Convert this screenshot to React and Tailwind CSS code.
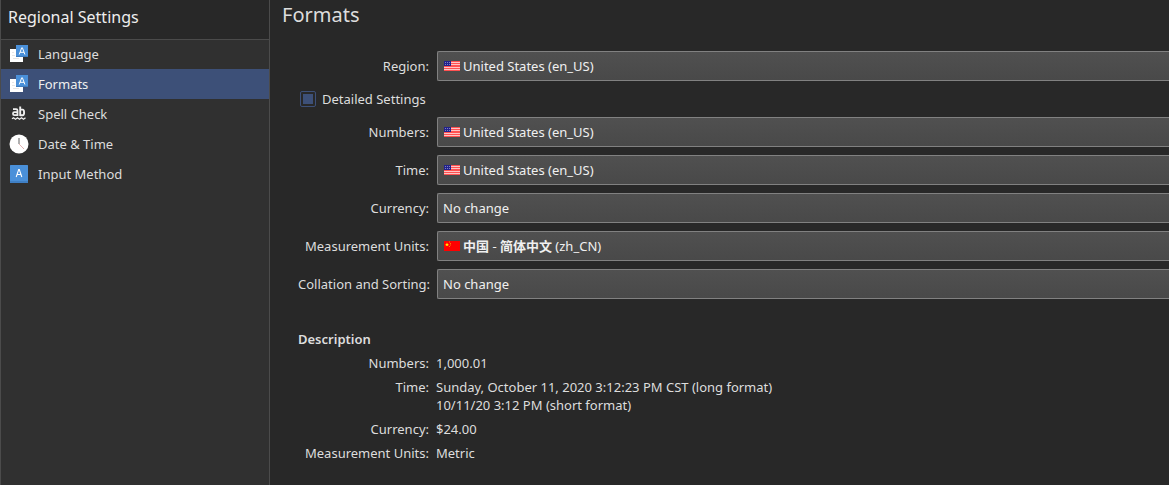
import { useState } from 'react';

function LocaleIcon() {
  return (
    <svg width="20" height="20" viewBox="0 0 20 20" aria-hidden="true" className="shrink-0">
      <rect x="1" y="5" width="13" height="13" fill="#ffffff" />
      <path d="M3 8.5h2M3 11.5h3M4 14.5h6" stroke="#e6e6e6" strokeWidth="1" />
      <rect x="7" y="1" width="12" height="12" fill="#4a90d9" />
      <rect x="7" y="12" width="12" height="1" fill="#3f7cbd" />
      <path d="M10.2 10.5 12.7 3.8h.7l2.5 6.7M11 8.3h4.1" fill="none" stroke="#ffffff" strokeWidth="1" />
    </svg>
  );
}

function SpellIcon() {
  return (
    <svg width="20" height="20" viewBox="0 0 20 20" aria-hidden="true" className="shrink-0" fill="none" stroke="#eeeeee">
      <path d="M4 5.2h3.2q1.3 0 1.3 1.3V12M8.5 8.2H5.4c-1.9 0-1.9 3 0 3h3" strokeWidth="1.8" />
      <path d="M11.2 2.5V12M11.2 5.6h2.4c2 0 2 5.6 0 5.6h-2.4" strokeWidth="1.9" />
      <path d="M3 14.8l1.5-1 2 1.5 2-1.5 2 1.5 2-1.5 2 1.5 2-1.5" strokeWidth="1.3" />
    </svg>
  );
}

function ClockIcon() {
  return (
    <svg width="20" height="20" viewBox="0 0 20 20" aria-hidden="true" className="shrink-0">
      <circle cx="10" cy="10" r="9.5" fill="#ffffff" />
      <path d="M10 10V4" stroke="#a8a8a8" strokeWidth="1.8" />
      <path d="M10 10l5 5" stroke="#dda0a0" strokeWidth="0.8" />
    </svg>
  );
}

function InputIcon() {
  return (
    <svg width="20" height="20" viewBox="0 0 20 20" aria-hidden="true" className="shrink-0">
      <rect x="1" y="1" width="18" height="18" rx="0.5" fill="#4a90d9" />
      <rect x="1" y="17" width="18" height="2" fill="#3f7fc4" />
      <path d="M7.2 13 9.7 5.5h.6l2.5 7.5M8 10.5h4" fill="none" stroke="#ffffff" strokeWidth="1.1" />
    </svg>
  );
}

function UsFlag() {
  return (
    <svg width="16" height="10" viewBox="0 0 16 10" aria-hidden="true">
      <rect width="16" height="10" fill="#ff5050" />
      <path d="M0 1.5h16M0 3.5h16M0 6.5h16M0 8.5h16" stroke="#ffc4c4" strokeWidth="1" />
      <rect width="7" height="5" fill="#22228c" />
      <path d="M1 1.5h5M1 3.5h5" stroke="#8080bd" strokeWidth="1" strokeDasharray="1 1" />
    </svg>
  );
}

function CnFlag() {
  return (
    <svg width="16" height="10" viewBox="0 0 16 10" aria-hidden="true">
      <rect width="16" height="10" fill="#ff0000" />
      <path d="M3 1.5l.6 1.4h1.5l-1.2.9.5 1.5L3 4.4l-1.4.9.5-1.5-1.2-.9h1.5z" fill="#ffee00" />
      <path d="M5 1h1M6 2.5h1M6 4h1M5 5.5h1" stroke="#ff9900" strokeWidth="0.8" />
    </svg>
  );
}

const pages = [
  { name: 'Language', Icon: LocaleIcon },
  { name: 'Formats', Icon: LocaleIcon },
  { name: 'Spell Check', Icon: SpellIcon },
  { name: 'Date & Time', Icon: ClockIcon },
  { name: 'Input Method', Icon: InputIcon },
];

const flags = { us: UsFlag, cn: CnFlag };

function LocaleRow({ id, label, initial }) {
  const [value, setValue] = useState(initial);
  const Flag = flags[value];
  return (
    <>
      <label htmlFor={id} className="text-right whitespace-nowrap">{label}</label>
      <div className="grid items-center">
        <select
          id={id}
          value={value}
          onChange={(e) => setValue(e.target.value)}
          className={`col-start-1 row-start-1 h-[30px] w-full appearance-none rounded-l-xs border border-r-0 border-[#818181] bg-linear-to-b from-[#505050] to-[#494949] ${Flag ? 'pl-[25px]' : 'pl-[5px]'} ${value === 'cn' ? 'text-transparent' : 'text-[#f0f0f0]'}`}
        >
          <option value="none" className="bg-[#494949] text-[#f0f0f0]">No change</option>
          <option value="us" className="bg-[#494949] text-[#f0f0f0]">United States (en_US)</option>
          <option value="cn" className="bg-[#494949] text-[#f0f0f0]">中国 - 简体中文 (zh_CN)</option>
        </select>
        {Flag && (
          <span
            aria-hidden="true"
            className="pointer-events-none col-start-1 row-start-1 ml-[7px] flex items-center gap-[3px] text-[#f0f0f0]"
          >
            <Flag />
            {/* A select has one weight for its whole text, so the mixed-weight name is drawn above it. */}
            {value === 'cn' && (
              <span>
                <b>中国</b> - <b>简体中文</b> (zh_CN)
              </span>
            )}
          </span>
        )}
      </div>
    </>
  );
}

function Detail({ term, children }) {
  return (
    <>
      <dt className="text-right whitespace-nowrap">{term}</dt>
      <dd>{children}</dd>
    </>
  );
}

export default function App() {
  const [page, setPage] = useState('Formats');
  return (
    <div className="flex min-h-screen bg-[#282828] font-['Noto_Sans','Noto_Sans_CJK_SC',sans-serif] text-[13px] leading-[18px] text-[#dddddd]">
      <aside className="w-[270px] shrink-0 border-x border-[#4b4b4b] bg-[#303030]">
        <h1 className="-mb-px flex h-10 items-center border-b border-[#4b4b4b] bg-[#282828] px-[7px] pb-[6px] text-base text-[#eeeeee]">
          Regional Settings
        </h1>
        <nav>
          {pages.map(({ name, Icon }) => (
            <button
              key={name}
              type="button"
              onClick={() => setPage(name)}
              aria-current={page === name ? 'page' : undefined}
              className={`flex h-[30px] w-full items-center gap-[9px] px-2 text-left ${page === name ? 'bg-[#3d5078] text-[#eeeeee]' : ''}`}
            >
              <Icon />
              {name}
            </button>
          ))}
        </nav>
      </aside>
      <main className="min-w-0 flex-1 overflow-hidden">
        <h2 className="px-3 pt-px text-xl leading-7">Formats</h2>
        <div className="pt-[22px] pl-7">
          <form className="grid grid-cols-[131px_1fr] items-center gap-2">
            <LocaleRow id="region" label="Region:" initial="us" />
            <label className="col-span-2 flex h-5 items-center gap-[6px] pl-[2px]">
              <input
                type="checkbox"
                defaultChecked
                className="size-4 appearance-none rounded-xs border border-[#3d5078] p-[2px] bg-clip-content checked:bg-[#3d5078]"
              />
              Detailed Settings
            </label>
            <LocaleRow id="numbers" label="Numbers:" initial="us" />
            <LocaleRow id="time" label="Time:" initial="us" />
            <LocaleRow id="currency" label="Currency:" initial="none" />
            <LocaleRow id="units" label="Measurement Units:" initial="cn" />
            <LocaleRow id="collation" label="Collation and Sorting:" initial="none" />
          </form>
          <h3 className="mt-[31px] font-semibold">Description</h3>
          <dl className="mt-[6px] grid grid-cols-[131px_1fr] gap-x-[7px] gap-y-[6px] pb-5">
            <Detail term="Numbers:">1,000.01</Detail>
            <Detail term="Time:">
              Sunday, October 11, 2020 3:12:23 PM CST (long format)
              <br />
              10/11/20 3:12 PM (short format)
            </Detail>
            <Detail term="Currency:">$24.00</Detail>
            <Detail term="Measurement Units:">Metric</Detail>
          </dl>
        </div>
      </main>
    </div>
  );
}
